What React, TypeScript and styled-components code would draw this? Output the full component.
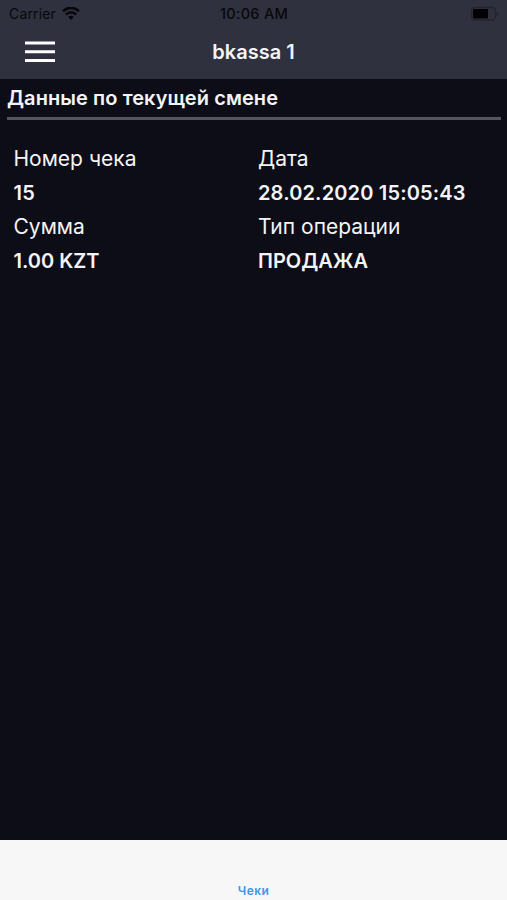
import React from "react";
import styled, { createGlobalStyle } from "styled-components";

const GlobalStyle = createGlobalStyle`
  * { box-sizing: border-box; }
  body { margin: 0; background: #0d0d17; }
`;

const Screen = styled.div`
  width: 507px;
  height: 900px;
  display: flex;
  flex-direction: column;
  background: #0d0d17;
  color: #f4f4f6;
  font-family: Inter, "Noto Sans", sans-serif;
  overflow: hidden;
`;

const Header = styled.header`
  height: 79px;
  background: #2f313e;
`;

const StatusBar = styled.div`
  height: 27px;
  padding: 0 8px 0 9px;
  display: grid;
  grid-template-columns: 1fr auto 1fr;
  align-items: center;
  color: #08080c;
  font-size: 14px;
`;

const Carrier = styled.div`
  display: flex;
  align-items: center;
  gap: 6px;
  letter-spacing: 0.15px;
`;

const Clock = styled.div`
  font-weight: 500;
  font-size: 14.5px;
  letter-spacing: 0.3px;
`;

const BatterySlot = styled.div`
  display: flex;
  justify-content: flex-end;
`;

const NavBar = styled.div`
  height: 50px;
  padding: 0 25px;
  display: grid;
  grid-template-columns: 60px 1fr 60px;
  align-items: center;
`;

const MenuButton = styled.button`
  width: 30px;
  height: 24px;
  padding: 0;
  border: 0;
  background: none;
  display: flex;
`;

const Title = styled.h1`
  margin: 0;
  text-align: center;
  font-size: 20px;
  font-weight: 600;
`;

const Content = styled.main`
  flex: 1;
  padding: 0 6px 0 7px;
`;

const SectionTitle = styled.h2`
  margin: 0;
  height: 41px;
  line-height: 39px;
  border-bottom: 3px solid #545460;
  font-size: 20px;
  font-weight: 600;
  letter-spacing: 0.08px;
`;

const Details = styled.dl`
  margin: 22px 0 0;
  padding-left: 6.5px;
  display: grid;
  grid-template-columns: 244.5px 1fr;
  row-gap: 1px;
`;

const Field = styled.div`
  height: 67px;
`;

const Label = styled.dt`
  height: 34px;
  line-height: 34px;
  font-size: 21px;
  white-space: nowrap;
`;

const Value = styled.dd<{ $tracking?: number }>`
  margin: 0;
  height: 33px;
  line-height: 34px;
  font-size: 20px;
  font-weight: 600;
  letter-spacing: ${(p) => p.$tracking ?? 0}px;
  white-space: nowrap;
`;

const TabBar = styled.nav`
  height: 60px;
  background: #f7f7f7;
  display: flex;
  justify-content: center;
  align-items: flex-end;
`;

const Tab = styled.span`
  line-height: 18px;
  font-size: 12px;
  font-weight: 600;
  letter-spacing: 0.4px;
  color: #3f95ea;
`;

const fields = [
  { label: "Номер чека", value: "15", tracking: 0.3 },
  { label: "Дата", value: "28.02.2020 15:05:43", tracking: 0.16 },
  { label: "Сумма", value: "1.00 KZT" },
  { label: "Тип операции", value: "ПРОДАЖА" },
];

const WifiIcon = () => (
  <svg width="18" height="14" viewBox="0 0 18 14" fill="none" stroke="currentColor" strokeWidth="2.7">
    <path d="M1 4.2a11.4 11.4 0 0 1 16 0M3.8 7.6a7.4 7.4 0 0 1 10.4 0" />
    <path d="M6.2 10a4 4 0 0 1 5.6 0L9 13z" fill="currentColor" stroke="none" />
  </svg>
);

const BatteryIcon = () => (
  <svg width="29" height="16" viewBox="0 0 29 16">
    <rect x="1.5" y="1.5" width="24" height="12.5" rx="3.5" fill="none" stroke="#23242e" strokeWidth="1.3" />
    <rect x="3" y="3" width="15" height="9.5" rx="1" fill="#020204" />
    <path d="M26.5 5.5v4.5q2-.6 2-2.2t-2-2.3" fill="#23242e" />
  </svg>
);

export default function App() {
  return (
    <>
      <GlobalStyle />
      <Screen>
        <Header>
          <StatusBar>
            <Carrier>Carrier<WifiIcon /></Carrier>
            <Clock>10:06 AM</Clock>
            <BatterySlot><BatteryIcon /></BatterySlot>
          </StatusBar>
          <NavBar>
            <MenuButton aria-label="Menu">
              <svg width="30" height="24" viewBox="0 0 30 24" stroke="#fff" strokeWidth="3">
                <path d="M0 3h30M0 11.8h30M0 20.5h30" />
              </svg>
            </MenuButton>
            <Title>bkassa 1</Title>
          </NavBar>
        </Header>
        <Content>
          <SectionTitle>Данные по текущей смене</SectionTitle>
          <Details>
            {fields.map((f) => (
              <Field key={f.label}>
                <Label>{f.label}</Label>
                <Value $tracking={f.tracking}>{f.value}</Value>
              </Field>
            ))}
          </Details>
        </Content>
        <TabBar><Tab>Чеки</Tab></TabBar>
      </Screen>
    </>
  );
}
